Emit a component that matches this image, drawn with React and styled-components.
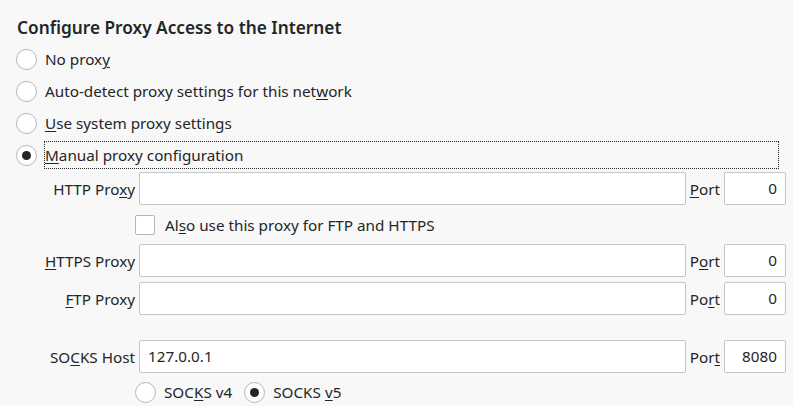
import React from 'react';
import styled, { createGlobalStyle } from 'styled-components';

const GlobalStyle = createGlobalStyle`
    html, body {
        margin: 0;
        padding: 0;
        background: #f8f8f8;
    }
    body {
        font-family: 'Noto Sans', 'Open Sans', sans-serif;
        font-size: 15.25px;
        color: #232627;
    }
`;

const Page = styled.div`
    width: 793px;
    height: 406px;
    overflow: hidden;
    background: #f8f8f8;
`;

const Title = styled.h1`
    margin: 0;
    padding: 13px 0 0 17px;
    height: 30px;
    line-height: 30px;
    font-size: 17.25px;
    font-weight: 600;
`;

const ModeList = styled.div`
    display: flex;
    flex-direction: column;
`;

const ModeRow = styled.label`
    height: 32px;
    display: flex;
    align-items: center;
    padding-left: 16px;
`;

const RadioDot = styled.span`
    box-sizing: border-box;
    flex: none;
    width: 21px;
    height: 21px;
    border-radius: 50%;
    border: 1px solid #b4b5b6;
    background: #fff;
    display: flex;
    align-items: center;
    justify-content: center;
    &::after {
        content: '';
        display: ${props => (props.checked ? 'block' : 'none')};
        width: 9px;
        height: 9px;
        border-radius: 50%;
        background: #232627;
    }
`;

const ModeText = styled.span`
    margin-left: 7px;
    height: 28px;
    line-height: 26px;
    box-sizing: border-box;
    flex: ${props => (props.focused ? '0 0 735px' : 'none')};
    border: 1px dotted ${props => (props.focused ? '#232627' : 'transparent')};
    white-space: nowrap;
`;

const Key = styled.u`
    text-decoration-thickness: 1px;
    text-underline-offset: 2px;
`;

const ManualGrid = styled.div`
    margin-top: 1px;
    width: 786px;
    display: grid;
    grid-template-columns: 135px 1fr auto 62px;
    column-gap: 4px;
    row-gap: 5px;
    align-items: center;
`;

const FieldLabel = styled.span`
    text-align: right;
    white-space: nowrap;
`;

const PortLabel = styled.span`
    white-space: nowrap;
`;

const TextBox = styled.div`
    box-sizing: border-box;
    height: 33px;
    background: #fff;
    border: 1px solid #c4c5c6;
    border-radius: 2px;
    padding: 0 8px;
    line-height: 31px;
    text-align: ${props => (props.right ? 'right' : 'left')};
    white-space: nowrap;
`;

const CheckRow = styled.label`
    grid-column: 2 / 5;
    height: 29px;
    display: flex;
    align-items: center;
    margin-left: -4px;
`;

const CheckBox = styled.span`
    box-sizing: border-box;
    width: 20px;
    height: 20px;
    border: 1px solid #b4b5b6;
    border-radius: 2px;
    background: #fff;
`;

const CheckText = styled.span`
    margin-left: 10px;
`;

const Spacer = styled.div`
    grid-column: 1 / 5;
    height: 15px;
`;

const VersionRow = styled.div`
    grid-column: 2 / 5;
    margin-left: -4px;
    height: 28px;
    display: flex;
    align-items: center;
`;

const VersionOption = styled.label`
    display: flex;
    align-items: center;
    margin-right: 12px;
`;

const VersionText = styled.span`
    margin-left: 8px;
`;

const modes = [
    { id: 'none', text: <>No prox<Key>y</Key></> },
    { id: 'auto', text: <>Auto-detect proxy settings for this net<Key>w</Key>ork</> },
    { id: 'system', text: <><Key>U</Key>se system proxy settings</> },
    { id: 'manual', text: <><Key>M</Key>anual proxy configuration</>, checked: true },
];

function ProxyRow({ label, port, value, portValue }) {
    return (
        <>
            <FieldLabel>{label}</FieldLabel>
            <TextBox>{value}</TextBox>
            <PortLabel>{port}</PortLabel>
            <TextBox right>{portValue}</TextBox>
        </>
    );
}

export default function App() {
    return (
        <Page>
            <GlobalStyle />
            <Title>Configure Proxy Access to the Internet</Title>
            <ModeList>
                {modes.map(mode => (
                    <ModeRow key={mode.id}>
                        <RadioDot checked={mode.checked} />
                        <ModeText focused={mode.checked}>{mode.text}</ModeText>
                    </ModeRow>
                ))}
            </ModeList>
            <ManualGrid>
                <ProxyRow
                    label={<>HTTP Pro<Key>x</Key>y</>}
                    port={<><Key>P</Key>ort</>}
                    portValue="0"
                />
                <CheckRow>
                    <CheckBox />
                    <CheckText>Al<Key>s</Key>o use this proxy for FTP and HTTPS</CheckText>
                </CheckRow>
                <ProxyRow
                    label={<><Key>H</Key>TTPS Proxy</>}
                    port={<>P<Key>o</Key>rt</>}
                    portValue="0"
                />
                <ProxyRow
                    label={<><Key>F</Key>TP Proxy</>}
                    port={<>Po<Key>r</Key>t</>}
                    portValue="0"
                />
                <Spacer />
                <ProxyRow
                    label={<>SO<Key>C</Key>KS Host</>}
                    value="127.0.0.1"
                    port={<>Por<Key>t</Key></>}
                    portValue="8080"
                />
                <VersionRow>
                    <VersionOption>
                        <RadioDot />
                        <VersionText>SOC<Key>K</Key>S v4</VersionText>
                    </VersionOption>
                    <VersionOption>
                        <RadioDot checked />
                        <VersionText>SOCKS <Key>v</Key>5</VersionText>
                    </VersionOption>
                </VersionRow>
            </ManualGrid>
        </Page>
    );
}
